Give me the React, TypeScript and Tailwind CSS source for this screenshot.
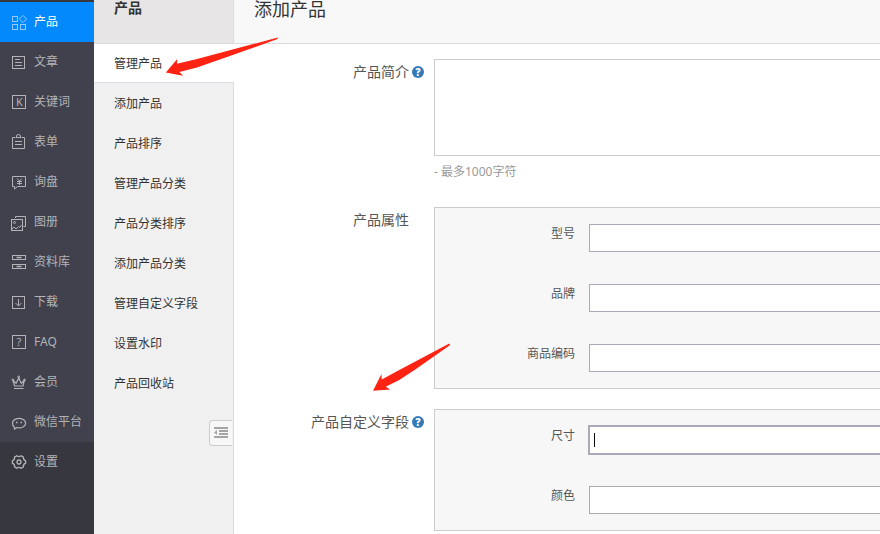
import * as React from "react";

type NavItem = {
  label: string;
  icon: React.ReactNode;
};

const iconText = {
  fill: "currentColor",
  stroke: "none",
  textAnchor: "middle" as const,
  fontFamily: '"Noto Sans", sans-serif',
};

const navItems: NavItem[] = [
  {
    label: "产品",
    icon: (
      <>
        <rect x="1.5" y="2.5" width="5" height="5" />
        <rect x="1.5" y="10.5" width="5" height="5" />
        <rect x="9.5" y="10.5" width="5" height="5" />
        <path d="M12 1.4 15.6 5 12 8.6 8.4 5Z" />
      </>
    ),
  },
  {
    label: "文章",
    icon: (
      <>
        <rect x="1.5" y="2.5" width="12" height="12" />
        <path d="M4 5.5h5M4 8.5h7M4 11.5h7" />
      </>
    ),
  },
  {
    label: "关键词",
    icon: (
      <>
        <rect x="1.5" y="1.5" width="13" height="13" />
        <text x="8.5" y="12" fontSize="11" {...iconText}>K</text>
      </>
    ),
  },
  {
    label: "表单",
    icon: (
      <path d="M4 3.5H1.5v11h12v-11H11M4.5 3.5h6M5.5 3V2q0-1.5 2-1.5t2 1.5v1M4 7.5h7M4 10.5h7" />
    ),
  },
  {
    label: "询盘",
    icon: (
      <>
        <path d="M1.5 2.5h13v10H6.5L3.5 15v-2.5h-2Z" />
        <path d="M6 4.5 8.5 7 11 4.5M8.5 7v4M6 7.5h5M6 9.5h5" />
      </>
    ),
  },
  {
    label: "图册",
    icon: (
      <>
        <path d="M4.5 4v-1.5h10v10h-2" />
        <rect x="0.5" y="5.5" width="11" height="11" />
        <circle cx="3.5" cy="8.5" r="1" />
        <path d="m1 15 2-2 2 2 2.5-2.5 1 1 2-2.5" />
      </>
    ),
  },
  {
    label: "资料库",
    icon: (
      <>
        <rect x="1.5" y="1.5" width="13" height="4" />
        <rect x="1.5" y="10.5" width="13" height="4" />
        <path d="M5.5 3.5h5M5.5 12.5h5" strokeWidth="1.5" />
      </>
    ),
  },
  {
    label: "下载",
    icon: (
      <>
        <rect x="1.5" y="2.5" width="12" height="12" />
        <path d="M7.5 5v7M4.5 9l3 3 3-3" />
      </>
    ),
  },
  {
    label: "FAQ",
    icon: (
      <>
        <rect x="1.5" y="1.5" width="13" height="13" />
        <text x="8" y="12" fontSize="11" {...iconText}>?</text>
      </>
    ),
  },
  {
    label: "会员",
    icon: (
      <>
        <path
          d="M2.2 6.5 3.5 12h8.5l1.3-5.5-3 2.8-2.6-5.3-2.6 5.3Z"
          strokeWidth="1.2"
        />
        <circle cx="1.9" cy="6" r="0.9" />
        <circle cx="7.7" cy="3" r="1" />
        <circle cx="13.5" cy="6" r="0.9" />
        <path d="M3 14.5h9.5" />
      </>
    ),
  },
  {
    label: "微信平台",
    icon: (
      <>
        <path
          d="M3.2 12.8C1 11 .9 8 3 6c2.5-2.3 7.5-2.3 10 0s2 5.5-1 7c-2 1-4.500 1-6 .5L3.5 15Z"
          strokeWidth="1.2"
        />
        <path d="M5 8.5h1.5M9.5 8.5H11" strokeWidth="1.6" />
      </>
    ),
  },
  {
    label: "设置",
    icon: (
      <>
        <path
          d="M5.8 1.8q2.2 1.6 4.4 0l2.2 1.3q-.3 2.7 2.2 3.7v2.4q-2.5 1-2.2 3.7l-2.2 1.3q-2.2-1.6-4.4 0l-2.2-1.3q.3-2.7-2.2-3.7V6.8q2.5-1 2.2-3.7Z"
          strokeWidth="1.3"
        />
        <circle cx="8" cy="8" r="2" strokeWidth="1.3" />
      </>
    ),
  },
];

const subItems = [
  "管理产品",
  "添加产品",
  "产品排序",
  "管理产品分类",
  "产品分类排序",
  "添加产品分类",
  "管理自定义字段",
  "设置水印",
  "产品回收站",
];

function NavLink({ item, active }: { item: NavItem; active?: boolean }) {
  return (
    <a
      href="#"
      className={`flex h-10 items-center gap-[7px] pl-[11px] text-xs ${
        active ? "bg-[#0389fb] text-white" : "text-[#b4b4b8]"
      }`}
    >
      <svg
        viewBox="0 0 16 16"
        className={`size-4 shrink-0 overflow-visible ${active ? "text-[#8fcbff]" : ""}`}
        fill="none"
        stroke="currentColor"
        aria-hidden="true"
      >
        {item.icon}
      </svg>
      <span className="whitespace-nowrap">{item.label}</span>
    </a>
  );
}

function HelpButton() {
  return (
    <button
      type="button"
      className="flex size-3 shrink-0 items-center justify-center rounded-full bg-[#337ab7] text-[10px] leading-3 font-black text-white"
    >
      ?
    </button>
  );
}

function FormRow({
  label,
  htmlFor,
  help,
  children,
}: {
  label: string;
  htmlFor?: string;
  help?: boolean;
  children: React.ReactNode;
}) {
  return (
    <div className="flex items-start gap-2.5">
      <div className="flex w-[190px] shrink-0 items-center justify-end gap-[3px] pt-[3px] text-sm leading-5 text-[#555]">
        <label htmlFor={htmlFor}>{label}</label>
        {help ? <HelpButton /> : <span className="w-3" />}
      </div>
      <div className="min-w-0 flex-1">{children}</div>
    </div>
  );
}

function FieldGroup({ fields, focused }: { fields: string[]; focused?: string }) {
  return (
    <div className="flex flex-col gap-8 border border-r-0 border-[#ccc] bg-[#f7f7f7] py-4">
      {fields.map((name) => (
        <div key={name} className="flex items-start">
          <label
            htmlFor={name}
            className="mr-3.5 w-[140px] shrink-0 text-right text-xs leading-5 text-[#555]"
          >
            {name}
          </label>
          <div className="relative min-w-0 flex-1">
            <input
              id={name}
              type="text"
              className={`block h-7 w-full border border-r-0 border-[#aba9b7] bg-white px-1 text-xs outline-none ${
                name === focused ? "ring-1 ring-[#aba9b7]" : ""
              }`}
            />
            {name === focused && (
              <span className="absolute top-[7px] left-[5px] h-3.5 w-px bg-black" />
            )}
          </div>
        </div>
      ))}
    </div>
  );
}

export default function App() {
  const mainItems = navItems.slice(0, -1);
  const settings = navItems[navItems.length - 1];

  return (
    <div className="relative flex min-h-screen overflow-hidden bg-white font-['Noto_Sans','Noto_Sans_CJK_SC',sans-serif]">
      {/* Main navigation */}
      <nav className="w-[94px] shrink-0 bg-[#36373f] pt-0.5">
        <div className="bg-[#40414c]">
          {mainItems.map((item, i) => (
            <NavLink key={item.label} item={item} active={i === 0} />
          ))}
        </div>
        <NavLink item={settings} />
      </nav>

      {/* Section menu */}
      <aside className="flex w-[140px] shrink-0 flex-col bg-[#f0f0f0]">
        <h2 className="h-11 border-r border-b border-[#dcdce0] bg-[#e7e5e5] pl-5 text-sm leading-4 font-bold text-[#333]">
          产品
        </h2>
        {subItems.map((label, i) => (
          <a
            key={label}
            href="#"
            className={`flex items-center pt-0.5 pl-5 text-xs text-[#333] ${
              i === 0
                ? "h-[39px] border-b border-[#dcdce0] bg-white"
                : "h-10 border-r border-r-[#dcdce0]"
            }`}
          >
            {label}
          </a>
        ))}
        <div className="flex flex-1 items-start justify-end border-r border-[#dcdce0] pt-[17px] pr-px">
          <button
            type="button"
            aria-label="收起"
            className="flex h-[26px] items-center rounded-l border border-r-0 border-[#ccc] bg-[#f7f7f7] px-1"
          >
            <svg viewBox="0 0 14 12" className="h-3 w-3.5 text-[#a5a5a5]" fill="currentColor">
              <path d="M0 0h14v2H0zM5 3h9v2H5zM5 6h9v2H5zM0 9h14v2H0zM3 3v5L0 5.5z" />
            </svg>
          </button>
        </div>
      </aside>

      {/* Product form */}
      <main className="min-w-0 flex-1">
        <header className="h-11 border-b border-[#dcdcdc] bg-[#f8f8f8] pl-5">
          <h1 className="text-lg leading-[18px] text-[#333]">添加产品</h1>
        </header>
        <form className="flex flex-col gap-5 pt-[15px]">
          <FormRow label="产品简介" htmlFor="intro" help>
            <textarea
              id="intro"
              className="block h-[97px] w-full resize-none border border-r-0 border-[#ccc] bg-white p-2 text-sm outline-none"
            />
            <p className="pt-[5px] pb-1 text-xs leading-[22px] text-[#999]">- 最多1000字符</p>
          </FormRow>
          <FormRow label="产品属性">
            <FieldGroup fields={["型号", "品牌", "商品编码"]} />
          </FormRow>
          <FormRow label="产品自定义字段" help>
            <FieldGroup fields={["尺寸", "颜色"]} focused="尺寸" />
          </FormRow>
        </form>
      </main>

      {/* Pointer arrows */}
      <svg
        width="480"
        height="400"
        viewBox="0 0 480 400"
        className="pointer-events-none absolute top-0 left-0"
        fill="#ff2314"
        aria-hidden="true"
      >
        <path d="M165.8 72.6 177.3 59 177 63.7 197 59 277.7 37.6 277.5 39 227 57 197 67.5 179.5 72 183 75.8Z" />
        <path d="M373 390.7 381.5 374 381.7 379.5 399.3 370 449.3 343.5 450.2 345 416 369 399.3 380 385.7 386.7 390.3 389.6Z" />
      </svg>
    </div>
  );
}
